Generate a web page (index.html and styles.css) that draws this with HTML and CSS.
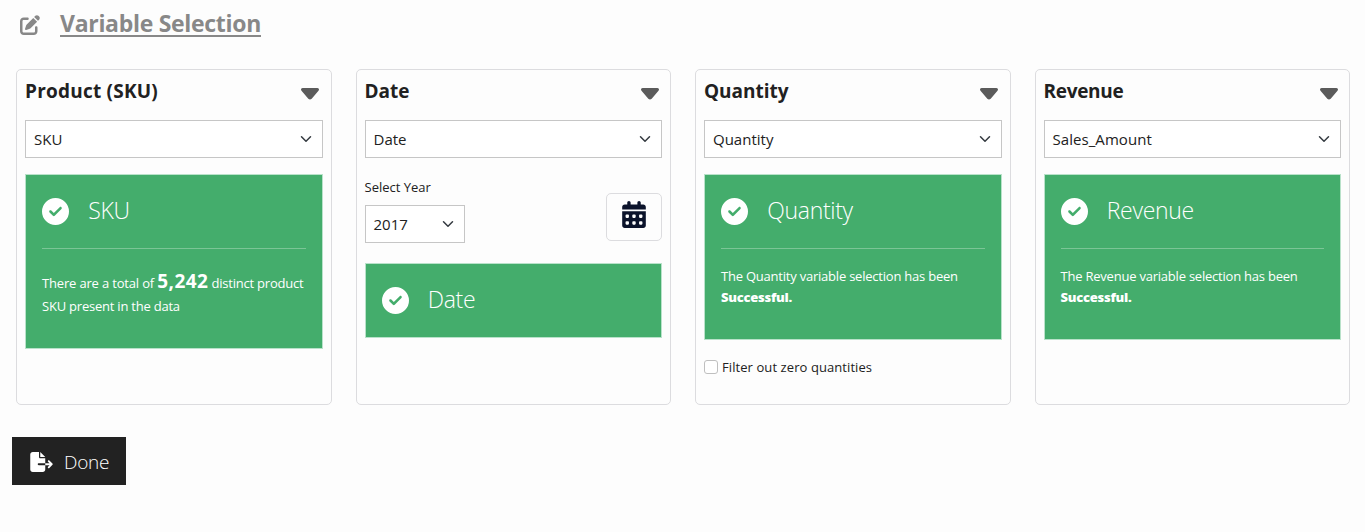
FILE: index.html
```html
<!DOCTYPE html>
<html lang="en">
<head>
<meta charset="utf-8">
<title>Variable Selection</title>
<link rel="stylesheet" href="styles.css">
</head>
<body>
<svg class="defs" aria-hidden="true">
  <symbol id="caret" viewBox="0 0 18 12"><path d="M1.600 0H16.400C17.900 0 18.500 1.700 17.500 2.700L10.700 10.800Q9 12.300 7.300 10.800L.5 2.700C-.5 1.700.1 0 1.600 0Z"/></symbol>
  <symbol id="chevron" viewBox="0 0 16 16"><path d="m2 5 6 6 6-6" fill="none" stroke="#343a40" stroke-linecap="round" stroke-linejoin="round" stroke-width="2"/></symbol>
  <symbol id="check" viewBox="0 0 512 512"><path d="M256 512A256 256 0 1 0 256 0a256 256 0 1 0 0 512zM369 209L241 337c-9.400 9.400-24.600 9.400-33.900 0l-64-64c-9.400-9.400-9.400-24.600 0-33.900s24.600-9.400 33.900 0l47 47L335 175c9.400-9.400 24.600-9.400 33.900 0s9.400 24.600 0 33.900z"/></symbol>
</svg>
<header class="heading">
  <svg class="edit" viewBox="0 0 512 512"><path d="M471.600 21.700c-21.900-21.900-57.300-21.900-79.200 0L362.300 51.700l97.900 97.900 30.100-30.100c21.900-21.900 21.900-57.300 0-79.200L471.600 21.700zm-299.200 220c-6.100 6.100-10.800 13.600-13.500 21.900l-29.600 88.800c-2.900 8.600-.6 18.100 5.800 24.600s15.900 8.700 24.600 5.800l88.800-29.600c8.200-2.700 15.700-7.400 21.900-13.500L437.700 172.300 339.700 74.300 172.400 241.700zM96 64C43 64 0 107 0 160V416c0 53 43 96 96 96H352c53 0 96-43 96-96V320c0-17.700-14.300-32-32-32s-32 14.300-32 32v96c0 17.700-14.300 32-32 32H96c-17.700 0-32-14.300-32-32V160c0-17.700 14.300-32 32-32h96c17.700 0 32-14.300 32-32s-14.300-32-32-32H96z"/></svg>
  <h1>Variable Selection</h1>
</header>
<main class="cards">
  <section class="card">
    <div class="card-head"><h2 class="t-product">Product (SKU)</h2><svg class="caret"><use href="#caret"/></svg></div>
    <div class="select"><span>SKU</span><svg class="chevron"><use href="#chevron"/></svg></div>
    <div class="alert">
      <div class="alert-head"><svg class="check"><use href="#check"/></svg><span class="alert-title">SKU</span></div>
      <hr>
      <p class="total"><span class="lead">There are a total of </span><b>5,242</b><span class="tail"> distinct product</span><br><span class="line2">SKU present in the data</span></p>
    </div>
  </section>
  <section class="card">
    <div class="card-head"><h2>Date</h2><svg class="caret"><use href="#caret"/></svg></div>
    <div class="select"><span>Date</span><svg class="chevron"><use href="#chevron"/></svg></div>
    <div class="year-row">
      <div class="year">
        <label>Select Year</label>
        <div class="select"><span>2017</span><svg class="chevron"><use href="#chevron"/></svg></div>
      </div>
      <button class="calendar"><svg viewBox="0 0 448 512"><path d="M128 0c17.700 0 32 14.300 32 32V64H288V32c0-17.700 14.300-32 32-32s32 14.300 32 32V64h48c26.500 0 48 21.500 48 48v48H0V112C0 85.500 21.500 64 48 64H96V32c0-17.700 14.300-32 32-32zM0 192H448V464c0 26.500-21.500 48-48 48H48c-26.500 0-48-21.500-48-48V192zm64 80v32c0 8.800 7.200 16 16 16h32c8.800 0 16-7.200 16-16V272c0-8.800-7.200-16-16-16H80c-8.800 0-16 7.200-16 16zm128 0v32c0 8.800 7.200 16 16 16h32c8.800 0 16-7.200 16-16V272c0-8.800-7.200-16-16-16H208c-8.800 0-16 7.200-16 16zm144-16c-8.800 0-16 7.200-16 16v32c0 8.800 7.200 16 16 16h32c8.800 0 16-7.200 16-16V272c0-8.800-7.200-16-16-16H336zM64 400v32c0 8.800 7.200 16 16 16h32c8.800 0 16-7.200 16-16V400c0-8.800-7.200-16-16-16H80c-8.800 0-16 7.200-16 16zm144-16c-8.800 0-16 7.200-16 16v32c0 8.800 7.200 16 16 16h32c8.800 0 16-7.200 16-16V400c0-8.800-7.200-16-16-16H208zm112 16v32c0 8.800 7.200 16 16 16h32c8.800 0 16-7.200 16-16V400c0-8.800-7.200-16-16-16H336c-8.800 0-16 7.200-16 16z"/></svg></button>
    </div>
    <div class="alert compact">
      <div class="alert-head"><svg class="check"><use href="#check"/></svg><span class="alert-title">Date</span></div>
    </div>
  </section>
  <section class="card">
    <div class="card-head"><h2>Quantity</h2><svg class="caret"><use href="#caret"/></svg></div>
    <div class="select"><span>Quantity</span><svg class="chevron"><use href="#chevron"/></svg></div>
    <div class="alert">
      <div class="alert-head"><svg class="check"><use href="#check"/></svg><span class="alert-title">Quantity</span></div>
      <hr>
      <p class="message">The Quantity variable selection has been<br><b>Successful.</b></p>
    </div>
    <label class="filter"><span class="box"></span><span class="filter-text">Filter out zero quantities</span></label>
  </section>
  <section class="card">
    <div class="card-head"><h2 class="t-revenue">Revenue</h2><svg class="caret"><use href="#caret"/></svg></div>
    <div class="select"><span class="v-sales">Sales_Amount</span><svg class="chevron"><use href="#chevron"/></svg></div>
    <div class="alert">
      <div class="alert-head"><svg class="check"><use href="#check"/></svg><span class="alert-title">Revenue</span></div>
      <hr>
      <p class="message">The Revenue variable selection has been<br><b>Successful.</b></p>
    </div>
  </section>
</main>
<button class="done"><svg viewBox="0 0 576 512"><path d="M0 64C0 28.700 28.700 0 64 0H224V128c0 17.700 14.300 32 32 32H384V288H216c-13.300 0-24 10.700-24 24s10.700 24 24 24H384V448c0 35.300-28.700 64-64 64H64c-35.300 0-64-28.700-64-64V64zM384 336V288H494.100l-39-39c-9.400-9.400-9.400-24.600 0-33.900s24.600-9.400 33.900 0l80 80c9.400 9.400 9.400 24.600 0 33.900l-80 80c-9.400 9.400-24.600 9.400-33.900 0s-9.400-24.600 0-33.900l39-39H384zm0-208H256V0L384 128z"/></svg><span>Done</span></button>
</body>
</html>
```
FILE: styles.css
```css
* { box-sizing: border-box; }
body { margin: 0; background: #fdfdfd; color: #212121; font-family: "Open Sans", "Noto Sans", sans-serif; font-size: 16px; height: 532px; overflow: hidden; white-space: nowrap; }
h1, h2, p { margin: 0; }
.defs { display: none; }
.heading { display: flex; align-items: center; height: 48px; padding-left: 20px; gap: 20px; color: #888; }
.edit { width: 20px; height: 20px; fill: #888; margin-top: 2px; }
h1 { font-size: 23px; line-height: 32px; margin-top: -2px; font-weight: 700; text-decoration: underline; text-decoration-thickness: 2px; text-decoration-skip-ink: none; text-underline-offset: 3px; letter-spacing: -.3px; }
.cards { display: grid; grid-template-columns: repeat(4, 1fr); gap: 24px; padding: 0 15px 0 16px; margin-top: 21px; }
.card { height: 336px; border: 1px solid #dcdcdf; border-radius: 5px; padding: 8px; background: #fdfdfd; }
.card-head { display: flex; justify-content: space-between; height: 42px; padding-right: 3.500px; }
h2 { font-size: 19px; line-height: 27px; font-weight: 700; }
.t-product { letter-spacing: .22px; }
.t-revenue { letter-spacing: -.3px; }
.caret { width: 18px; height: 12px; margin-top: 10px; fill: #5b5b5b; }
.select { display: flex; align-items: center; justify-content: space-between; height: 38px; border: 1px solid #c6c6c6; background: #fff; padding: 0 10px 0 8px; font-size: 15px; }
.v-sales { letter-spacing: .06px; }
.chevron { width: 12px; height: 12px; }
.alert { margin-top: 16px; padding: 16px; border: 1px solid #b9e2ca; background: #44ad6c; color: #fff; }
.alert-head { display: flex; align-items: center; gap: 19.200px; height: 41px; }
.alert-title { font-size: 23px; line-height: 32px; font-weight: 300; letter-spacing: -.3px; margin-top: -3px; }
.check { width: 27px; height: 27px; fill: #fff; }
hr { margin: 16px 0; border: 0; border-top: 1px solid #7bc596; }
.total { font-size: 13px; line-height: 23px; padding-top: 5px; height: 67px; }
.total b { font-size: 19px; line-height: 23px; letter-spacing: .45px; }
.lead, .tail { white-space: pre; }
.lead { letter-spacing: -.17px; }
.tail, .line2 { letter-spacing: -.22px; }
.message { font-size: 13px; line-height: 21px; height: 58px; padding-top: 1px; letter-spacing: -.22px; }
.message b { font-weight: 800; letter-spacing: -.25px; }
.year-row { display: flex; justify-content: space-between; height: 89px; padding-top: 19px; }
.year { width: 100px; }
.year label { display: block; font-size: 13px; line-height: 20px; margin-bottom: 8px; }
.calendar { display: flex; justify-content: center; width: 56px; height: 48px; margin-top: 16px; padding: 7px 0 0; border: 1px solid #dcdcdf; border-radius: 5px; background: #fdfdfd; }
.calendar svg { width: 24px; height: 27px; fill: #0b132b; }
.compact { height: 75px; }
.filter { display: flex; align-items: center; gap: 4px; height: 20px; margin-top: 17px; font-size: 13px; }
.filter-text { letter-spacing: .08px; }
.box { width: 14px; height: 14px; border: 1px solid #bfbfbf; border-radius: 3px; background: #fff; }
.done { display: flex; align-items: center; gap: 11px; width: 114px; height: 48px; margin: 32px 0 0 12px; padding: 2px 0 0 18px; border: 0; background: #222; color: #fff; font: 300 19px "Open Sans", sans-serif; letter-spacing: -.25px; }
.done svg { width: 23px; height: 20px; fill: #fff; }
```
